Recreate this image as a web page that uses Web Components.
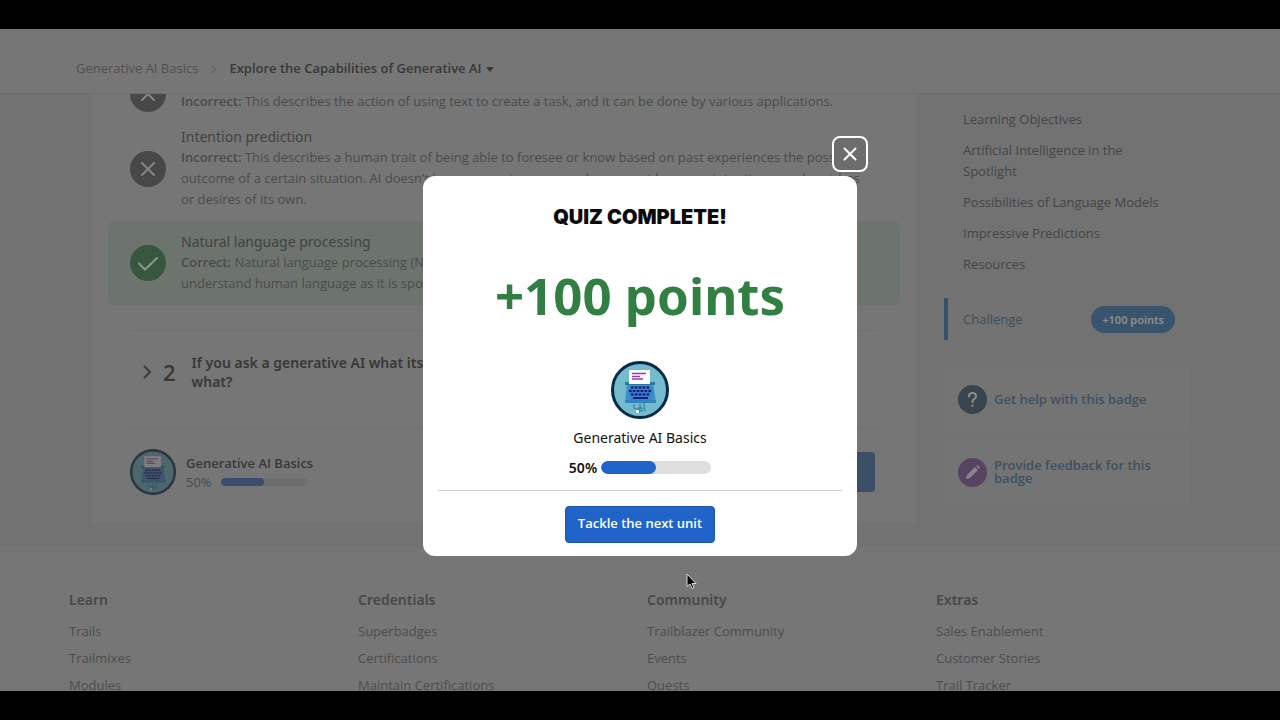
<!DOCTYPE html>
<html lang="en">
<head>
<meta charset="utf-8">
<title>Generative AI Basics</title>
<style>
  :root {
    --surface: #767676;
    --canvas: #727272;
    --line: #707070;
    --ink: #383838;
    --text: #4b4b4b;
    --muted: #505050;
    --link: #3e5163;
    --wide: "Noto Sans", sans-serif;
  }
  body { margin: 0; background: #000; color: var(--text); font-family: "Open Sans", "Noto Sans", sans-serif; font-size: 13px; line-height: 21px; }
</style>
</head>
<body>
<lesson-page></lesson-page>
<script>
const define = (name, html, setup) => {
  const template = document.createElement('template');
  template.innerHTML = html;
  customElements.define(name, class extends HTMLElement {
    constructor() {
      super();
      this.attachShadow({ mode: 'open' }).append(template.content.cloneNode(true));
    }
    connectedCallback() { if (setup) setup(this, this.shadowRoot); }
  });
};

define('unit-badge', `
  <style>
    :host { display: block; flex: none; width: 58px; height: 58px; }
    :host([dim]) { width: 46px; height: 46px; border-radius: 50%; background: #3c3c3c; }
    svg { display: block; width: 100%; height: 100%; }
    :host([dim]) svg { opacity: .34; }
  </style>
  <svg viewBox="0 0 58 58" role="img" aria-label="Typewriter badge">
    <circle cx="29" cy="29" r="27.5" fill="#73bbcd" stroke="#052b49" stroke-width="3"/>
    <path d="M23 43v3q0 2 3 2h2v4M33 42v4q0 3 2 4M29 43v8M27 47q5-2 4 4" fill="none" stroke="#368ea9" stroke-width="1.4"/>
    <rect x="25" y="49" width="3" height="3" fill="#e8f6ff"/>
    <path d="M16 22h26l3 20H14z" fill="#3d91cb"/>
    <path d="M14 39h31v3H14z" fill="#2f84bf"/>
    <path d="M14 21h30v3H14z" fill="#267da0"/>
    <path d="M18 9h21v14H18z" fill="#fff"/>
    <path d="M21 12.500h14M21 15.500h8M21 18h11" stroke="#9937bd" stroke-width="1.300"/>
    <path d="M19 25h21l3 8-3 6H20l-3-6z" fill="#3a86c8"/>
    <g fill="none" stroke="#171c82" stroke-width="2.600" stroke-linecap="round" stroke-dasharray=".5 3.400">
      <path d="M21 26.500h19M19 30h23M21 33.500h19"/>
    </g>
    <path d="M22 37h15" stroke="#171c82" stroke-width="2"/>
  </svg>`);

define('result-icon', `
  <style>
    :host { display: block; flex: none; width: 36px; height: 36px; border-radius: 50%; background: #484848; color: #858585; }
    :host([kind="correct"]) { background: #38573f; color: #8b988c; }
    svg { display: block; }
    .tick, :host([kind="correct"]) .cross { display: none; }
    :host([kind="correct"]) .tick { display: inline; }
  </style>
  <svg viewBox="0 0 36 36" fill="none" stroke="currentColor" stroke-width="2" stroke-linecap="round" aria-hidden="true">
    <path class="cross" d="M12 12l12 12M24 12L12 24"/>
    <path class="tick" d="M9 18.500l6 6L27 13"/>
  </svg>`);

define('answer-row', `
  <style>
    :host { display: flex; align-items: center; gap: 15px; padding: 11px 22px; border-radius: 6px; }
    :host([kind="correct"]) { background: #6d746d; }
    h3 { margin: 0; font-family: var(--wide); font-size: 14px; line-height: 20px; font-weight: 400; color: #424242; }
    p { margin: 0; }
  </style>
  <result-icon></result-icon>
  <div><h3></h3><p><slot></slot></p></div>`, (host, root) => {
  root.querySelector('result-icon').setAttribute('kind', host.getAttribute('kind') || '');
  const h = root.querySelector('h3');
  if (host.hasAttribute('heading')) h.textContent = host.getAttribute('heading'); else h.remove();
});

define('progress-bar', `
  <style>
    :host { display: block; width: 110px; height: 13px; border-radius: 8px; overflow: hidden; background: #dedede; }
    div { width: 50%; height: 100%; border-radius: inherit; background: #2064ca; }
    :host([dim]) { width: 86px; height: 8px; background: #6e6e6e; }
    :host([dim]) div { background: #3a4e6b; border-radius: 4px; }
  </style>
  <div></div>`);

define('unit-header', `
  <style>
    :host { display: flex; align-items: center; gap: 12px; box-sizing: border-box; height: 65px; padding: 15px 76px 0; background: var(--surface); border-bottom: 1px solid #6d6d6d; position: relative; }
    a { color: var(--muted); text-decoration: none; }
    button { display: flex; align-items: center; gap: 4px; border: 0; padding: 0; background: none; font: inherit; font-weight: 600; color: var(--ink); }
  </style>
  <a href="#basics">Generative AI Basics</a>
  <svg width="7" height="10" viewBox="0 0 7 10" fill="none" stroke="#5a5a5a" aria-hidden="true"><path d="M1 1l5 4-5 4"/></svg>
  <button type="button">Explore the Capabilities of Generative AI
    <svg width="8" height="6" viewBox="0 0 8 6" aria-hidden="true"><path d="M0 1h8L4 6z" fill="#383838"/></svg></button>`);

define('quiz-card', `
  <style>
    :host { display: block; padding: 0 16px 28px; background: var(--surface); box-sizing: border-box; }
    .first { align-items: flex-end; padding-top: 0; padding-bottom: 4px; }
    b { font-weight: 600; }
    .question { display: flex; align-items: center; gap: 12px; margin: 25px 22px 0; padding: 22px 10px 36px 13px; border: solid var(--line); border-width: 1px 0; color: var(--ink); }
    .number { font-size: 22px; font-weight: 600; }
    h2 { margin: 0 0 0 4px; font-family: var(--wide); font-size: 14px; line-height: 19px; font-weight: 600; }
    footer { display: flex; align-items: center; gap: 10px; padding: 21px 25px 0 22px; }
    .name { font-weight: 600; color: var(--ink); line-height: 20px; }
    .progress { display: flex; align-items: center; gap: 9px; line-height: 19px; }
    .check { margin-left: auto; width: 150px; height: 40px; border: 0; border-radius: 4px; background: #3a4f65; }
  </style>
  <answer-row class="first"><b>Incorrect:</b> This describes the action of using text to create a task, and it can be done by various applications.</answer-row>
  <answer-row heading="Intention prediction"><b>Incorrect:</b> This describes a human trait of being able to foresee or know based on past experiences the possible outcome of a certain situation. AI doesn’t have a consciousness and so cannot have any intentions, goals, wishes<br>or desires of its own.</answer-row>
  <answer-row kind="correct" heading="Natural language processing"><b>Correct:</b> Natural language processing (NLP) is a field of AI that lets computers<br>understand human language as it is spoken and written.</answer-row>
  <section class="question">
    <svg width="8" height="14" viewBox="0 0 8 14" fill="none" stroke="#3c3c3c" stroke-width="2" aria-hidden="true"><path d="M1 1l6 6-6 6"/></svg>
    <span class="number">2</span>
    <h2>If you ask a generative AI what its favorite flavor is, its answer will be based on<br>what?</h2>
  </section>
  <footer>
    <unit-badge dim></unit-badge>
    <div>
      <div class="name">Generative AI Basics</div>
      <div class="progress">50% <progress-bar dim></progress-bar></div>
    </div>
    <button class="check" type="button" aria-label="Check the quiz"></button>
  </footer>`);

define('help-card', `
  <style>
    :host { display: flex; align-items: center; gap: 7px; min-height: 64px; box-sizing: border-box; padding: 8px 28px 8px 14px; background: #747474; }
    a { color: var(--link); font-weight: 600; line-height: 13px; text-decoration: none; }
    svg { flex: none; }
    .pen, :host([kind="feedback"]) .help { display: none; }
    :host([kind="feedback"]) .pen { display: inline; }
  </style>
  <svg width="29" height="29" viewBox="0 0 29 29" aria-hidden="true">
    <g class="help"><circle cx="14.500" cy="14.500" r="14.500" fill="#3a444f"/>
      <path d="M11 11.500q0-3.500 3.500-3.500t3.500 3q0 2-2 3.200-1.500 1-1.500 2.800M14.500 20.500v.5" fill="none" stroke="#8a8a8a" stroke-width="2.200" stroke-linecap="round"/></g>
    <g class="pen"><circle cx="14.500" cy="14.500" r="14.500" fill="#564462"/>
      <path d="M8 21l1-4 8-8 3 3-8 8zM18 8l1.500-1 2.500 2.500-1 1.500z" fill="#8d828f"/></g>
  </svg>
  <a href="#support"><slot></slot></a>`);

define('unit-nav', `
  <style>
    :host { display: block; }
    nav { display: grid; gap: 10px; padding: 33px 28px 23px 19px; }
    a { color: #454545; text-decoration: none; }
    .current { display: flex; align-items: center; justify-content: space-between; box-sizing: border-box; height: 42px; margin-bottom: 27px; padding: 0 15px; border-left: 4px solid #365069; }
    .current a { color: #3e4f60; }
    .pill { padding: 3px 11px; border-radius: 14px; background: #3a546d; color: #909090; font-family: var(--wide); font-size: 11px; font-weight: 600; }
    help-card + help-card { margin-top: 8px; min-height: 66px; }
  </style>
  <nav aria-label="Unit contents">
    <a href="#objectives">Learning Objectives</a>
    <a href="#spotlight">Artificial Intelligence in the<br>Spotlight</a>
    <a href="#models">Possibilities of Language Models</a>
    <a href="#predictions">Impressive Predictions</a>
    <a href="#resources">Resources</a>
  </nav>
  <div class="current"><a href="#challenge">Challenge</a><span class="pill">+100 points</span></div>
  <help-card>Get help with this badge</help-card>
  <help-card kind="feedback">Provide feedback for this badge</help-card>`);

define('footer-column', `
  <style>
    :host { display: block; }
    h2 { margin: 0 0 8px; font-family: var(--wide); font-size: 14px; line-height: 21px; font-weight: 600; color: #484848; }
    ::slotted(a) { display: block; color: #4d4d4d; text-decoration: none; font-size: 13px; line-height: 27px; }
  </style>
  <h2></h2><slot></slot>`, (host, root) => { root.querySelector('h2').textContent = host.getAttribute('heading'); });

define('site-footer', `
  <style>
    :host { display: grid; grid-template-columns: repeat(4, 1fr); padding: 42px 55px 0 69px; background: var(--surface); }
  </style>
  <footer-column heading="Learn"><a href="#t">Trails</a><a href="#m">Trailmixes</a><a href="#o">Modules</a></footer-column>
  <footer-column heading="Credentials"><a href="#s">Superbadges</a><a href="#c">Certifications</a><a href="#mc">Maintain Certifications</a></footer-column>
  <footer-column heading="Community"><a href="#tc">Trailblazer Community</a><a href="#e">Events</a><a href="#q">Quests</a></footer-column>
  <footer-column heading="Extras"><a href="#se">Sales Enablement</a><a href="#cs">Customer Stories</a><a href="#tt">Trail Tracker</a></footer-column>`);

define('quiz-dialog', `
  <style>
    :host { display: block; position: relative; box-sizing: border-box; width: 434px; max-width: 90vw; padding: 26px 15px 13px; border-radius: 12px; background: #fff; color: #111; text-align: center; }
    h1 { margin: 0; font: 900 20px/30px Inter, sans-serif; color: #0b0b0b; }
    .points { margin: 28px 0 31px; font-family: var(--wide); font-size: 51px; line-height: 70px; font-weight: 700; color: #317f43; }
    unit-badge { margin: 0 auto; }
    .name { margin-top: 8px; font-family: var(--wide); font-size: 14px; line-height: 21px; }
    .progress { display: flex; align-items: center; justify-content: center; gap: 4px; margin: 9px 0 12px; font-family: var(--wide); font-size: 14px; font-weight: 600; }
    .actions { padding-top: 15px; border-top: 1px solid #ccc; }
    .next { height: 37px; padding: 0 12px 2px; border: 1px solid #1b54ad; border-radius: 4px; background: #2064ca; color: #fff; font: inherit; font-weight: 600; vertical-align: top; }
    .close { position: absolute; top: -40px; right: -11px; width: 36px; height: 36px; padding: 0; display: grid; place-items: center; border: 2px solid #fff; border-radius: 8px; background: #6d6d6d; }
  </style>
  <button class="close" type="button" aria-label="Close">
    <svg width="14" height="14" viewBox="0 0 14 14" stroke="#fff" stroke-width="2" stroke-linecap="round" aria-hidden="true"><path d="M1.500 1.500l11 11M12.500 1.500l-11 11"/></svg>
  </button>
  <h1>QUIZ COMPLETE!</h1>
  <div class="points">+100 points</div>
  <unit-badge></unit-badge>
  <div class="name">Generative AI Basics</div>
  <div class="progress">50% <progress-bar></progress-bar></div>
  <div class="actions"><button class="next" type="button">Tackle the next unit</button></div>`);

define('lesson-page', `
  <style>
    :host { display: block; box-sizing: border-box; height: 100vh; padding: 29px 0; }
    .screen { position: relative; height: 100%; overflow: hidden; background: var(--canvas); }
    unit-header { z-index: 1; }
    main { display: grid; grid-template-columns: 1fr 246px; gap: 28px; padding: 0 90px 24px 92px; }
    quiz-card { margin-top: -18px; }
    unit-nav { margin-top: -18px; }
    .overlay { position: absolute; inset: 0; z-index: 2; display: flex; justify-content: center; align-items: flex-start; padding-top: 147px; }
    .cursor { position: absolute; left: 686px; top: 544px; z-index: 3; }
  </style>
  <div class="screen">
    <unit-header></unit-header>
    <main><quiz-card></quiz-card><unit-nav></unit-nav></main>
    <site-footer></site-footer>
    <div class="overlay"><quiz-dialog role="dialog" aria-modal="true" aria-label="Quiz complete"></quiz-dialog></div>
    <svg class="cursor" width="11" height="17" viewBox="0 0 11 17" aria-hidden="true"><path d="M1 1v12.500l3-2.500 2 4.500 2-1-2-4h4z" fill="#000" stroke="#ddd"/></svg>
  </div>`);
</script>
</body>
</html>
